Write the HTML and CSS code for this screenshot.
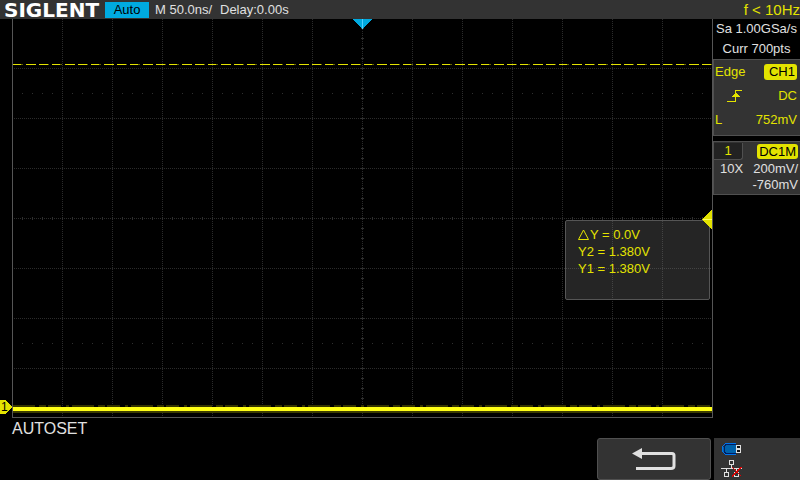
FILE: index.html
```
<!DOCTYPE html>
<html lang="en">
<head>
<meta charset="utf-8">
<title>SIGLENT oscilloscope</title>
<link rel="stylesheet" href="styles.css">
</head>
<body>
<div class="scope">
  <header class="topbar">
    <span class="brand">SIGLENT</span>
    <span class="mode">Auto</span>
    <span class="timebase">M 50.0ns/</span>
    <span class="delay">Delay:0.00s</span>
    <span class="frequency">f &lt; 10Hz</span>
  </header>
  <div class="body">
    <main class="display">
      <svg class="graticule" viewBox="0 0 713 400" preserveAspectRatio="none" shape-rendering="crispEdges" aria-hidden="true">
        <g fill="none" stroke="#2b2b2b" stroke-dasharray="1 1">
          <path d="M62.5 0V398M112.5 0V398M162.5 0V398M212.5 0V398M262.5 0V398M312.5 0V398M362.5 0V398M412.5 0V398M462.5 0V398M512.5 0V398M562.5 0V398M612.5 0V398M662.5 0V398"/>
          <path d="M14 49.5H712M14 99.5H712M14 149.5H712M14 199.5H712M14 249.5H712M14 299.5H712M14 349.5H712"/>
        </g>
        <g fill="none" stroke="#303030">
          <path d="M22 74.5H712M22 324.5H712" stroke-dasharray="1 9"/>
          <path d="M22 199.5H712" stroke-width="3" stroke-dasharray="1 9"/>
          <path d="M362.5 9V398" stroke-width="3" stroke-dasharray="1 9"/>
        </g>
        <path d="M12.5 0V398.5H712.5V0" fill="none" stroke="#555"/>
        <path d="M13 45.5H712" stroke="#686800" stroke-dasharray="10 3"/>
        <path d="M13 45.5H712" stroke="#e3e300" stroke-dasharray="8 5 10 3 9 4"/>
        <path d="M13 386.5H712" stroke="#343400" stroke-width="2" stroke-dasharray="22 4 7 2 13 5 3 3"/>
        <path d="M13 392.5H712" stroke="#3c3c00" stroke-width="2"/>
        <path d="M13 390H712" stroke="#ffff16" stroke-width="4"/>
        <path d="M353 0H372L363 10H362Z" fill="#00aae0"/>
        <path d="M362.5 0V10" stroke="#50d0ff"/>
        <path d="M0 381H6L12 388L6 395H0Z" fill="#e3e300"/>
      </svg>
      <span class="marker">1</span>
      <section class="cursors">
        <svg class="cursor-grid" viewBox="0 0 143 78" preserveAspectRatio="none" shape-rendering="crispEdges" aria-hidden="true">
          <path d="M46.5 0V78M96.5 0V78M0 47.5H143" fill="none" stroke="#444" stroke-dasharray="1 1"/>
        </svg>
        <div class="reading"><svg class="delta" viewBox="0 0 11 11" role="img" aria-label="Delta"><path d="M5.5 1L10.500 10.5H.5Z" fill="none" stroke="currentColor"/></svg>Y = 0.0V</div>
        <div class="reading">Y2 = 1.380V</div>
        <div class="reading">Y1 = 1.380V</div>
      </section>
      <svg class="level" viewBox="0 0 10 19" shape-rendering="crispEdges" role="img" aria-label="Trigger level"><path d="M10 0V19L0 9.5Z" fill="#e3e300"/><path d="M1 9.5H10" stroke="#ffff60"/></svg>
    </main>
    <aside class="sidebar">
      <div class="sampling">
        <div>Sa 1.00GSa/s</div>
        <div>Curr 700pts</div>
      </div>
      <section class="trigger">
        <div class="row"><span>Edge</span><span class="badge">CH1</span></div>
        <div class="row"><svg class="edge-icon" viewBox="0 0 16 13" shape-rendering="crispEdges" role="img" aria-label="Rising edge"><path d="M0 11.5H8.5V.5H15" fill="none" stroke="currentColor"/><path d="M4 7H13L9 3H8Z" fill="currentColor"/></svg><span>DC</span></div>
        <div class="row"><span>L</span><span>752mV</span></div>
      </section>
      <section class="channel">
        <div class="channel-head"><span class="tab">1</span><span class="badge coupling">DC1M</span></div>
        <div class="scale"><span>10X</span><span>200mV/</span></div>
        <div class="offset">-760mV</div>
      </section>
    </aside>
  </div>
  <div class="menu-title">AUTOSET</div>
  <footer class="menu">
    <button class="back" type="button" aria-label="Back"><svg class="back-icon" viewBox="0 0 44 24" aria-hidden="true"><path d="M8 6.5H40Q42 6.5 42 8.5V19Q42 21.5 39 21.5H4" fill="none" stroke="#e0e0e0" stroke-width="3"/><path d="M0 6.5L10 1V12Z" fill="#e0e0e0"/></svg></button>
    <div class="status">
      <svg class="usb" viewBox="0 0 20 13" shape-rendering="crispEdges" role="img" aria-label="USB drive"><path d="M14 1H4L1 4V9L4 12H14Z" fill="#0062aa"/><path d="M14 .5H3.5L.5 3.5V8.5L3.5 11.5H14" fill="none" stroke="#0075ec"/><path d="M14 1.5H4L2 4V9L4 10.5H14" fill="none" stroke="#001c60"/><path d="M14 2H19V10H14Z" fill="#e0e0e0"/><path d="M15 3H18V5H15ZM15 7H18V9H15Z" fill="#111"/></svg>
      <svg class="lan" viewBox="0 0 22 18" shape-rendering="crispEdges" role="img" aria-label="Network disconnected"><path d="M8.5 1.5H12.5V5.5H8.5ZM10.5 6V9M0 9.5H21M5.5 9V13M3.5 13.5H7.5V17.5H3.5ZM15.5 9V13M13.5 13.5H17.5V17.5H13.5Z" fill="none" stroke="#e0e0e0"/><path d="M11 8L20.5 17.5M20.5 8L11 17.5" fill="none" stroke="#e00000"/></svg>
    </div>
  </footer>
</div>
</body>
</html>
```
FILE: styles.css
```
* { box-sizing: border-box; }

body {
  margin: 0;
  background: #000;
  color: #e0e0e0;
  font: 13px/16px "Liberation Sans", Arial, sans-serif;
}

.scope {
  display: flex;
  flex-direction: column;
  min-height: 100vh;
}

.topbar {
  display: flex;
  align-items: center;
  height: 19px;
  padding-left: 4px;
  background: #333;
  white-space: nowrap;
}

.brand {
  width: 101px;
  color: #fff;
  font: bold 20px/24px "DejaVu Sans", sans-serif;
}

.mode {
  width: 44px;
  margin-right: 6px;
  background: #00aae0;
  color: #000;
  text-align: center;
}

.timebase { width: 65px; }

.frequency {
  margin-left: auto;
  color: #e3e300;
  font-size: 15px;
}

.body { display: flex; }

.display {
  position: relative;
  flex: 1;
}

.graticule {
  display: block;
  width: 100%;
  height: 400px;
}

.marker {
  position: absolute;
  left: 1px;
  top: 380px;
  color: #000;
  font-size: 12px;
}

.cursors {
  position: absolute;
  top: 201px;
  right: 3px;
  width: 145px;
  height: 80px;
  padding: 5px 12px;
  border: 1px solid #555;
  border-radius: 2px;
  background: #252525;
  color: #e3e300;
}

.cursor-grid {
  position: absolute;
  inset: 0;
  width: 100%;
  height: 100%;
}

.level {
  position: absolute;
  top: 191px;
  right: 1px;
  width: 10px;
  height: 19px;
}

.reading {
  position: relative;
  line-height: 17px;
}

.delta {
  width: 11px;
  height: 11px;
  margin-right: 1px;
  vertical-align: -1px;
}

.sidebar { width: 87px; }

.sampling {
  height: 40px;
  line-height: 20px;
  text-align: center;
}

.trigger,
.channel {
  border: 1px solid #505050;
  border-width: 1px 0 1px 1px;
  background: #333;
}

.trigger {
  display: grid;
  grid-template-rows: repeat(3, 24px);
  height: 77px;
  margin-bottom: 5px;
  color: #e3e300;
}

.row {
  display: flex;
  align-items: center;
  justify-content: space-between;
  padding: 0 3px 0 1px;
}

.badge {
  padding: 0 2px 0 5px;
  border-radius: 3px;
  background: #e3e300;
  color: #000;
}

.edge-icon {
  width: 16px;
  height: 13px;
  margin-left: 12px;
}

.channel { height: 54px; }

.channel-head {
  display: flex;
  align-items: center;
  justify-content: space-between;
  height: 19px;
  padding-right: 2px;
}

.tab {
  width: 29px;
  height: 17px;
  border: 1px solid #505050;
  border-width: 0 1px 1px 0;
  border-radius: 0 0 3px 0;
  background: #222;
  color: #e3e300;
  text-align: center;
}

.coupling {
  padding: 0 2px;
  line-height: 15px;
}

.scale {
  display: flex;
  justify-content: space-between;
  padding: 0 2px 0 6px;
}

.offset {
  padding-right: 2px;
  text-align: right;
}

.menu-title {
  padding-left: 12px;
  font-size: 16px;
  line-height: 19px;
}

.menu {
  display: flex;
  justify-content: flex-end;
  gap: 3px;
  height: 42px;
}

.back {
  display: flex;
  align-items: center;
  justify-content: center;
  width: 114px;
  padding: 0;
  border: 1px solid #505050;
  border-radius: 3px;
  background: #333;
}

.back-icon {
  width: 44px;
  height: 24px;
}

.status {
  display: flex;
  flex-direction: column;
  gap: 3px;
  width: 86px;
  padding: 5px 7px 0;
  background: #333;
}

.usb {
  width: 20px;
  height: 13px;
  margin-left: 1px;
}

.lan {
  width: 22px;
  height: 18px;
}
```
